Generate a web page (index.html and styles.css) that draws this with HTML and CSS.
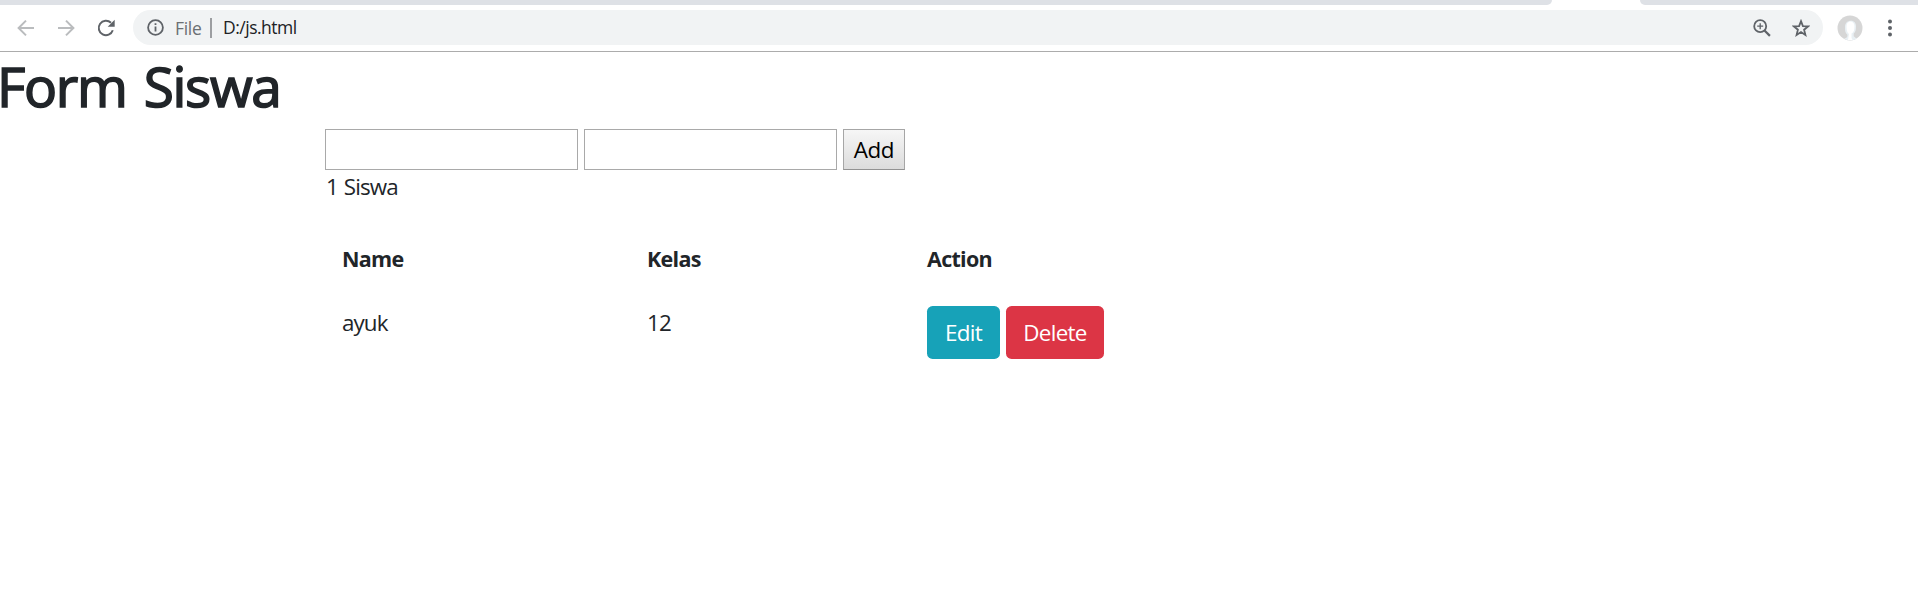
FILE: index.html
```html
<!DOCTYPE html>
<html lang="id">
<head>
<meta charset="utf-8">
<title>Form Siswa</title>
<link rel="stylesheet" href="styles.css">
</head>
<body>
<header class="browser">
  <div class="tabstrip"><div class="tabs-left"></div><div class="tabs-right"></div></div>
  <div class="toolbar">
    <svg class="back" width="18" height="18" viewBox="0 0 18 18" fill="none" stroke="#babcbe" stroke-width="2"><path d="M17 9H2M9 1.6 1.6 9 9 16.4"/></svg>
    <svg class="forward" width="18" height="18" viewBox="0 0 18 18" fill="none" stroke="#babcbe" stroke-width="2"><path d="M1 9h15M9 1.6 16.4 9 9 16.4"/></svg>
    <svg class="reload" width="18" height="18" viewBox="0 0 18 18"><path d="M15.8 11.2A7.2 7.2 0 1 1 14 3.8" fill="none" stroke="#5f6368" stroke-width="2"/><path d="M17.7.8v7h-7z" fill="#5f6368"/></svg>
    <div class="omnibox">
      <svg class="info" width="17" height="17" viewBox="0 0 17 17"><circle cx="8.5" cy="8.5" r="7.4" fill="none" stroke="#5f6368" stroke-width="1.8"/><path d="M7.6 7.6h1.8v5H7.6zM7.6 4.3h1.8v1.8H7.6z" fill="#5f6368"/></svg>
      <span class="scheme">File</span>
      <span class="divider"></span>
      <span class="url">D:/js.html</span>
      <svg class="zoom" width="18" height="18" viewBox="0 0 18 18" fill="none" stroke="#5f6368"><circle cx="7.2" cy="7.2" r="6" stroke-width="1.8"/><path d="m11.5 11.5 5.4 5.4" stroke-width="2.2"/><path d="M7.2 4.2v6M4.2 7.2h6" stroke-width="1.3"/></svg>
      <svg class="star" width="18" height="18" viewBox="0 0 18 18"><path d="m9 2.2 1.9 4.9 5.2.3-4 3.3 1.3 5.2L9 13l-4.4 2.9 1.3-5.2-4-3.3 5.2-.3z" fill="none" stroke="#5f6368" stroke-width="1.8"/></svg>
    </div>
    <svg class="avatar" width="26" height="26" viewBox="0 0 26 26"><circle cx="13" cy="13" r="12.5" fill="#d6d6d6"/><path d="M8 12c0-8 11-8 11-1 0 4-.5 6-2.300 7.500v2.700l3 2.500c-4 2-9 2-12.500 0 3-1 3.300-2 3.200-4C8 18 8 15 8 12z" fill="#e9f0f4"/><path d="M9.500 11c0-6 8-6 8 0s-2 7-3 7.500v4.500l1 2h-4.500l1-6c-2-1.500-2.500-4-2.500-8z" fill="#fff"/></svg>
    <svg class="menu" width="4" height="18" viewBox="0 0 4 18" fill="#5f6368"><circle cx="2" cy="2.500" r="2"/><circle cx="2" cy="9" r="2"/><circle cx="2" cy="15.500" r="2"/></svg>
  </div>
</header>
<main>
  <h1>Form Siswa</h1>
  <form class="entry">
    <input type="text" aria-label="Name"><input type="text" aria-label="Kelas"><button class="add" type="button">Add</button>
  </form>
  <p class="count">1 Siswa</p>
  <div class="students">
    <strong>Name</strong><strong>Kelas</strong><strong>Action</strong>
    <span>ayuk</span><span>12</span>
    <div class="actions"><button class="btn edit" type="button">Edit</button><button class="btn delete" type="button">Delete</button></div>
  </div>
</main>
</body>
</html>
```
FILE: styles.css
```css
* { box-sizing: border-box; }
body { margin: 0; background: #fff; color: #212529; font: 22.4px/34px "Open Sans", "Noto Sans", sans-serif; letter-spacing: -.9px; overflow: hidden; }
svg { display: block; flex: none; }
span, strong { white-space: nowrap; }
strong { padding-top: 1px; font-size: 21.5px; letter-spacing: -.7px; }
.browser { height: 52px; border-bottom: 1px solid #acacac; }
.tabstrip { display: flex; justify-content: space-between; height: 5px; }
.tabs-left, .tabs-right { background: #dee1e6; }
.tabs-left { width: 1552px; border-bottom-right-radius: 6px; }
.tabs-right { width: 278px; border-bottom-left-radius: 6px; }
.toolbar { display: flex; align-items: center; height: 45px; padding-left: 17px; }
.forward { margin-left: 22px; }
.reload { margin-left: 22px; }
.omnibox { display: flex; align-items: center; width: 1690px; height: 35px; margin-left: 18px; border-radius: 18px; background: #f1f3f4; font-size: 17.5px; }
.info { margin-left: 14px; }
.scheme { width: 35px; margin-left: 11px; color: #6b6f73; letter-spacing: -.3px; }
.divider { width: 2px; height: 20px; background: #9c9ea1; }
.url { margin: 0 0 1px 11px; color: #202124; letter-spacing: -.5px; }
.zoom { margin-left: auto; }
.star { margin: 0 13px 0 21px; }
.avatar { margin-left: 14px; }
.menu { margin-left: 25px; }
h1 { margin: 0 0 0 -3px; height: 77px; font-size: 55px; line-height: 67px; font-weight: 500; letter-spacing: -1.3px; word-spacing: 4px; -webkit-text-stroke: 1.6px #212529; }
.entry { display: flex; gap: 6px; height: 41px; margin-left: 325px; }
.entry input { width: 253px; height: 41px; border: 1px solid #a9a9a9; padding: 2px; background: #fff; }
.add { width: 62px; height: 41px; padding: 0; border: 1px solid #a6a6a6; border-bottom-color: #929292; background: linear-gradient(#f6f6f6, #dcdcdc); font: inherit; letter-spacing: -.4px; color: #000; }
.count { margin: 0 0 0 326px; height: 34px; word-spacing: 1px; }
.students { display: grid; grid-template-columns: 305px 280px auto; grid-template-rows: 65px 54px; justify-content: start; margin: 37px 0 0 342px; }
.actions { display: flex; gap: 6px; }
.btn { height: 53px; padding: 0; border: 0; border-radius: 5.6px; font: inherit; letter-spacing: -.7px; color: #fff; }
.edit { width: 73px; background: #17a2b8; }
.delete { width: 98px; background: #dc3545; }
```
